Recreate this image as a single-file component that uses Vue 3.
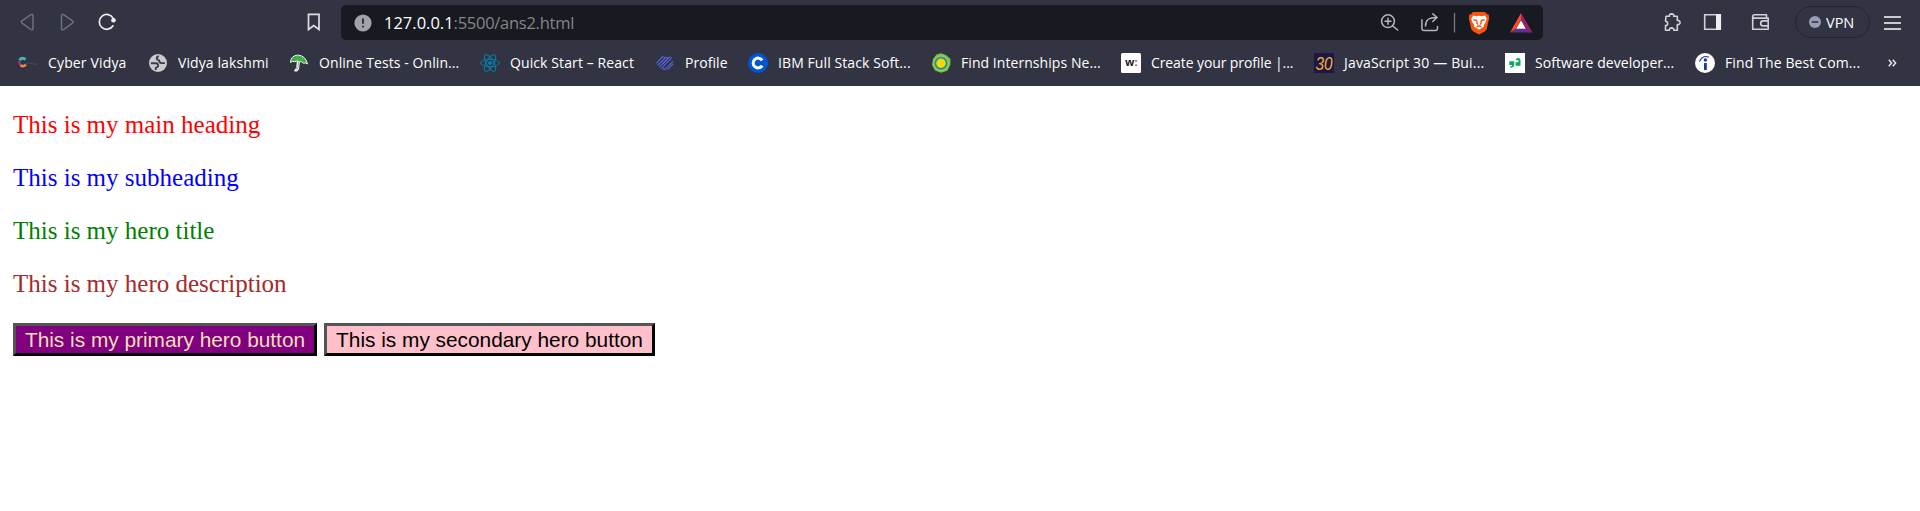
<script setup>
const bookmarks = [
  { icon: 'cyber', label: 'Cyber Vidya', width: 130, spacing: 0.15 },
  { icon: 'globe', label: 'Vidya lakshmi', width: 141, spacing: 0.1 },
  { icon: 'umbrella', label: 'Online Tests - Onlin...', width: 191, spacing: 0.08 },
  { icon: 'react', label: 'Quick Start – React', width: 175, spacing: 0.1 },
  { icon: 'profile', label: 'Profile', width: 93, spacing: 0.05 },
  { icon: 'coursera', label: 'IBM Full Stack Soft...', width: 183, spacing: 0.09 },
  { icon: 'intern', label: 'Find Internships Ne...', width: 190, spacing: 0.06 },
  { icon: 'wellfound', label: 'Create your profile |...', width: 193, spacing: -0.1 },
  { icon: 'js30', label: 'JavaScript 30 — Bui...', width: 191, spacing: 0.17 },
  { icon: 'glassdoor', label: 'Software developer...', width: 190, spacing: 0.06 },
  { icon: 'indeed', label: 'Find The Best Com...', width: 193, spacing: 0.12 }
]
</script>

<template>
  <div class="window">
    <header class="chrome">
      <div class="toolbar">
        <svg class="nav" viewBox="0 0 341 44" fill="none" stroke-linejoin="round" stroke-linecap="round">
          <path class="dim" d="M31 14.6q2-1 2 1v13q0 2-2 1l-9-6.400q-1.500-1.100 0-2.300z" />
          <path class="dim" d="M63.500 14.600q-2-1-2 1v13q0 2 2 1l9-6.400q1.500-1.100 0-2.300z" />
          <path class="lit" d="M113.200 18.300A7.400 7.400 0 1 0 113 25.800" />
          <circle cx="113.500" cy="20.300" r="2.300" fill="#eee" />
          <path class="mark" d="M308.500 14.300h10.500v15.200l-5.250-4-5.250 4z" stroke-linejoin="miter" />
        </svg>

        <div class="address">
          <svg class="info" viewBox="0 0 18 18">
            <circle cx="9" cy="9" r="8.600" fill="#a1a2ab" />
            <path d="M9 4.600v5.200M9 11.700v1.800" stroke="#20222b" stroke-width="1.700" />
          </svg>
          <span class="url"><b>127.0.0.1</b>:5500/ans2.html</span>
          <svg class="actions" viewBox="1375 5 168 35" fill="none">
            <g stroke="#b5b6ba" stroke-width="1.500" stroke-linecap="round">
              <circle cx="1388" cy="21.200" r="6.400" />
              <path d="M1392.700 26l5 4M1385 21.200h6M1388 18.200v6" />
              <path d="M1421.900 19.700v8.500q0 2.300 2.300 2.300h11q2.300 0 2.300-2.300v-1.700" />
              <path d="M1425.500 26c0-6 3-8.500 11-8.500M1432.800 13.900l4.200 3.600-4.200 4" />
            </g>
            <path d="M1454.500 13v19.500" stroke="#777980" stroke-width="1.300" />
            <path fill="#fb5411" d="M1473 12h12l2 2.200 1.700.2.500 4-.6 2-1.900 8.800-2 2.300-5.700 3.100-5.700-3.100-2-2.300-1.900-8.800-.6-2 .5-4 1.700-.2z" />
            <path fill="#fff" d="M1473 15.500l3 .7 3-.5 3 .5 3-.7 1.800 3.500-1.300 3.500-1.700 2.500.2 1.500-5 3.300-5-3.300.2-1.500-1.700-2.500-1.300-3.500z" />
            <path stroke="#fb5411" stroke-width="1.400" d="M1473.500 19.700l3.200.8.300 3 1 1M1484.500 19.700l-3.200.8-.3 3-1 1M1476.500 26.800l2.500-1 2.500 1" />
            <path fill="#ff4b23" d="M1521 13v6.500l-5.300 9.800-5.700 3.200z" />
            <path fill="#9e1f63" d="M1521 13l11.500 19.500-6.300-3.200-5.200-9.800z" />
            <path fill="#662d91" d="M1510 32.500l5.700-3.700h10.500l6.300 3.700z" />
            <path fill="#fff" d="M1521 20.300l4.800 8.500h-9.600z" />
          </svg>
        </div>

        <svg class="tools" viewBox="1660 0 115 44" fill="none" stroke="#d0d1d5" stroke-width="1.600" stroke-linejoin="round">
          <path d="M1666 16.300h3.600q-.8-2.200 2-2.400 2.800.2 2 2.400h3.700v4.100q2.700-.3 2.800 2.100-.1 2.400-2.800 2.100v5.700h-3.500q.2-2.300-2.200-2.400-2.400.1-2.200 2.400h-3.900v-4.700q2.200-.3 2.200-2.200 0-1.900-2.200-2.200z" />
          <path d="M1704.700 14.700h15.600v14.600h-15.600z" stroke-linejoin="miter" />
          <path d="M1716 14h5v16h-5z" fill="#eee" stroke="none" />
          <path d="M1766.500 18v-3.300h-12a1.700 1.700 0 0 0 0 3.400h13.700v2.800M1768.200 26v3.300h-15.500V16.500M1768.200 20.900h-5a2.500 2.500 0 0 0 0 5h5z" />
        </svg>

        <div class="vpn">
          <svg class="minus" viewBox="0 0 12 12">
            <circle cx="6" cy="6" r="6" fill="#9b9db6" />
            <path d="M2.700 6h6.600" stroke="#323443" stroke-width="1.600" />
          </svg>
          <span>VPN</span>
        </div>
        <div class="menu"><i></i><i></i><i></i></div>
      </div>

      <nav class="bookmarks">
        <div v-for="b in bookmarks" :key="b.label" class="bookmark" :style="{ width: b.width + 'px' }">
          <svg class="favicon" viewBox="0 0 20 20" fill="none">
            <g v-if="b.icon === 'cyber'">
              <path d="M1.500 7.200Q4 3.500 7.500 6.500" stroke="#46b6b5" stroke-width="3" />
              <path d="M1.300 8q-.4 3 1.500 4.500" stroke="#b7307c" stroke-width="2" />
              <path d="M2.500 12.300q2.500 2 5.500-.7" stroke="#ef8a4d" stroke-width="2.600" />
              <path d="M8 10.500q2-1 5 0t7 .5" stroke="#484a55" stroke-width="1.200" />
            </g>
            <g v-else-if="b.icon === 'globe'">
              <circle cx="10" cy="10" r="9" fill="#c9cbd0" />
              <path d="M2.800 10.200h5q2.200 0 2.200 2v1.300l-2.200 1.200v2.300M10.800 3.200q-2.300.5-2 2.400.2 1.600 2.200 1.800.2 2.600 2.600 2.700h3.400" stroke="#3c3e4b" stroke-width="1.900" />
            </g>
            <g v-else-if="b.icon === 'umbrella'">
              <path d="M9.500 7.500l-.8 7.500q-.6 3-3 1.600" stroke="#f4f6f4" stroke-width="3" />
              <path d="M1.500 9.500Q1.500 3 8.500 2 16.500 2.300 18.500 11q-2-1.700-4.200-.8-1.800-2.200-4-1.300-2.300-1.800-4.500-.2Q3.500 7.800 1.500 9.500z" fill="#43ad49" stroke="#e9f4ea" stroke-width="1" />
              <path d="M9.700 9l-.8 6q-.6 1.800-2.300 1.200" stroke="#8a9991" stroke-width=".8" />
            </g>
            <g v-else-if="b.icon === 'react'" stroke="#087ea4" stroke-width="1">
              <ellipse cx="10" cy="10" rx="9.400" ry="3.700" />
              <ellipse cx="10" cy="10" rx="9.400" ry="3.700" transform="rotate(60 10 10)" />
              <ellipse cx="10" cy="10" rx="9.400" ry="3.700" transform="rotate(120 10 10)" />
              <circle cx="10" cy="10" r="1.500" fill="#087ea4" />
            </g>
            <g v-else-if="b.icon === 'profile'" stroke="#5262dc" stroke-width="1.150" stroke-linecap="round">
              <path d="M1.700 9.800L7 4.300q1.500-1.200 2.500.2M3 12l7.500-7.200q2-1.200 2.200.8L7.500 11" />
              <path d="M4.500 13.800L14 4.500q2-1 2.200.8L6.500 15.300" />
              <path d="M17.800 8.700l-7.300 7.200q-1.500 1-2.300-.3M18 11l-5.300 5.300" />
            </g>
            <g v-else-if="b.icon === 'coursera'">
              <circle cx="10" cy="10" r="10" fill="#0056d2" />
              <path d="M14.200 7.400A4.900 4.900 0 1 0 14.200 12.600" stroke="#fff" stroke-width="3" />
            </g>
            <g v-else-if="b.icon === 'intern'">
              <path d="M10 .3l5 1.700 4.500 4-.2 6-3 5.700-6.300 2.100-6-2.300-3-5.500 1-6 3.500-4.500z" fill="#7ac043" />
              <circle cx="10" cy="10.200" r="7.500" stroke="#a3d34a" stroke-width="1" />
              <circle cx="10" cy="10.200" r="6.300" fill="#148fb8" />
              <circle cx="10" cy="10.200" r="4.700" fill="#ffd400" />
            </g>
            <g v-else-if="b.icon === 'wellfound'">
              <rect width="20" height="20" rx="1.500" fill="#fff" />
              <text x="4" y="13" class="well" textLength="12.500" lengthAdjust="spacingAndGlyphs">w<tspan fill="#ec2e3a">:</tspan></text>
            </g>
            <g v-else-if="b.icon === 'js30'">
              <rect width="20" height="20" fill="#1d164d" />
              <text x="1.500" y="16.500" class="thirty" textLength="17" lengthAdjust="spacingAndGlyphs">30</text>
            </g>
            <g v-else-if="b.icon === 'glassdoor'">
              <path d="M0 0h20v20H0z" fill="#fff" />
              <path d="M4.300 8.300h5v3.500q0 2.800-4 3v-1.600q1.700-.1 2-1.300h-3z" fill="#0caa61" />
              <path d="M10.600 6.600q.4-1.600 2.400-1.600 2.500 0 2.500 2.300v5.500h-4.900V9.300h2.900V7.600q0-.8-1-.6-.4.100-.4.600z" fill="#0caa61" />
            </g>
            <g v-else>
              <circle cx="10" cy="10" r="10" fill="#fff" />
              <circle cx="10.400" cy="7" r="1.700" fill="#173b9b" />
              <path d="M10.400 10v7" stroke="#173b9b" stroke-width="2.800" />
              <path d="M4.500 8.500Q7.500 1.500 14 4.300" stroke="#173b9b" stroke-width="1.200" />
            </g>
          </svg>
          <span class="label" :style="{ letterSpacing: b.spacing + 'px' }">{{ b.label }}</span>
        </div>
        <svg class="more" viewBox="0 0 9 8" fill="none" stroke="#e6e6e8" stroke-width="1.500">
          <path d="M.8.800L3.600 4 .8 7.200M4.800.800L7.600 4 4.800 7.200" />
        </svg>
      </nav>
    </header>

    <main class="page">
      <p class="main-heading">This is my main heading</p>
      <p class="subheading">This is my subheading</p>
      <p class="hero-title">This is my hero title</p>
      <p class="hero-description">This is my hero description</p>
      <div class="buttons">
        <button class="primary">This is my primary hero button</button>
        <button class="secondary">This is my secondary hero button</button>
      </div>
    </main>
  </div>
</template>

<style>
body { margin: 0; background: #fff; }
</style>

<style scoped>
.window { width: 1920px; height: 511px; overflow: hidden; background: #fff; }
svg { display: block; flex: none; }
.chrome { height: 86px; background: #323443; font-family: "Open Sans", "Noto Sans", sans-serif; color: #fff; }
.toolbar { display: flex; height: 44px; align-items: flex-start; }
.nav { width: 341px; height: 44px; }
.dim { stroke: #6d6f7b; stroke-width: 1.5; }
.lit { stroke: #eee; stroke-width: 1.7; }
.mark { stroke: #dedfe2; stroke-width: 1.7; }
.address { display: flex; align-items: center; width: 1202px; height: 35px; margin-top: 5px; border-radius: 5px; background: #181a21; }
.info { width: 18px; height: 18px; margin-left: 13px; }
.url { margin-left: 12px; flex: 1; font-size: 16.5px; line-height: 35px; letter-spacing: -0.27px; color: #85868a; white-space: nowrap; }
.url b { font-weight: 400; letter-spacing: 0; color: #fff; }
.actions { width: 168px; height: 35px; }
.tools { width: 115px; height: 44px; margin-left: 117px; }
.vpn { box-sizing: border-box; display: flex; align-items: center; width: 75px; height: 32px; margin: 6px 0 0 20px; padding-left: 13px; border: 1px solid #23252f; border-radius: 16px; font-size: 14.5px; gap: 5px; }
.minus { width: 12px; height: 12px; }
.menu { display: flex; flex-direction: column; gap: 4.5px; width: 17px; margin: 16px 0 0 14px; }
.menu i { height: 1.5px; background: #c9cace; }
.bookmarks { display: flex; align-items: center; height: 38px; padding-left: 18px; }
.bookmark { display: flex; align-items: center; gap: 10px; flex: none; }
.favicon { width: 20px; height: 20px; }
.label { font-size: 14px; line-height: 20px; white-space: nowrap; }
.more { width: 9px; height: 8px; }
.well { font: 700 10.5px "Open Sans", sans-serif; fill: #222; }
.thirty { font: italic 18px "Liberation Sans", sans-serif; fill: #f3b51b; }
.page { padding: 25px 13px 0; font: 25px/28px "Liberation Serif", serif; }
.page p { margin: 0 0 25px; }
.main-heading { color: red; }
.subheading { color: blue; }
.hero-title { color: green; }
.hero-description { color: brown; }
.buttons { display: flex; gap: 7px; }
.buttons button { box-sizing: border-box; height: 33px; padding: 0; border: 3px solid; border-color: #545454 #000 #000 #545454; font: 20.83px/24px "Liberation Sans", Arial, sans-serif; white-space: nowrap; }
.buttons .primary { width: 304px; background: purple; color: wheat; }
.buttons .secondary { width: 331px; background: pink; color: #000; }
</style>
